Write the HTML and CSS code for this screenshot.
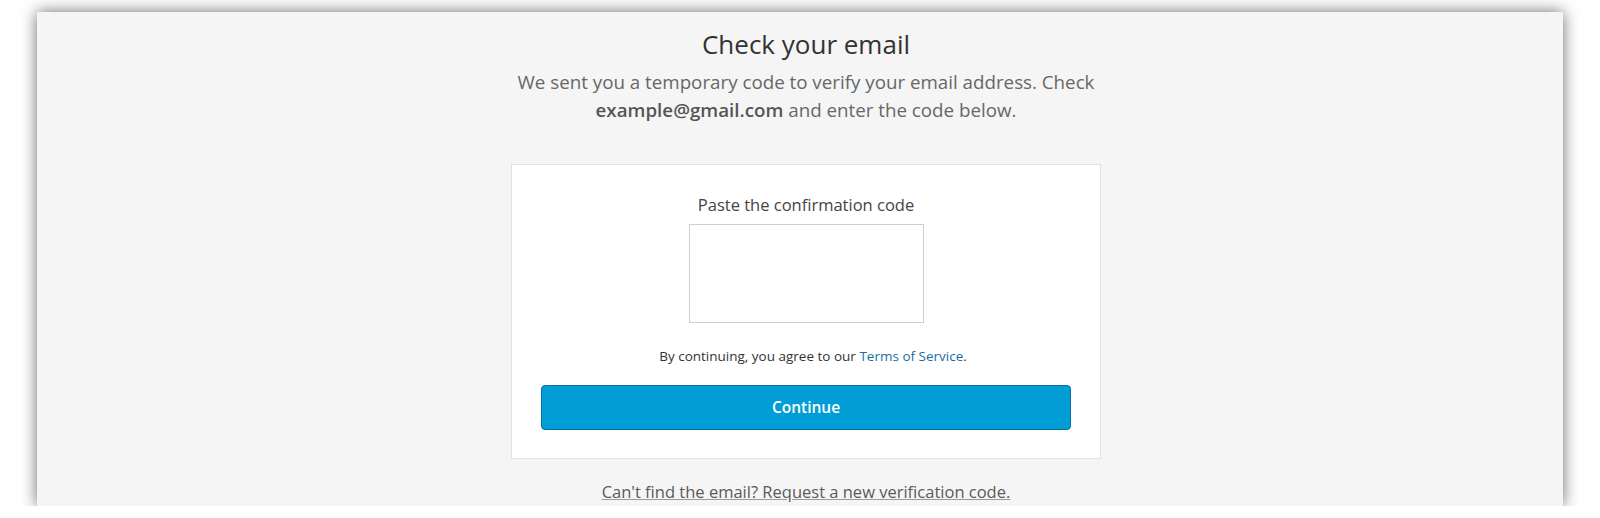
FILE: index.html
```html
<!DOCTYPE html>
<html lang="en">
<head>
<meta charset="utf-8">
<title>Check your email</title>
<link rel="stylesheet" href="styles.css">
</head>
<body>
<div class="panel">
  <div class="content">
    <h1 class="title">Check your email</h1>
    <p class="subtitle">We sent you a temporary code to verify your email address. Check<br><strong>example@gmail.com</strong> and enter the code below.</p>
    <div class="card">
      <label class="label" for="code">Paste the confirmation code</label>
      <textarea id="code" class="code-input"></textarea>
      <p class="terms">By continuing, you agree to our <a href="#" class="terms-link">Terms of Service</a>.</p>
      <button class="btn" type="button">Continue</button>
    </div>
    <a href="#" class="resend">Can't find the email? Request a new verification code.</a>
  </div>
</div>
</body>
</html>
```
FILE: styles.css
```css
html, body {
  margin: 0;
  padding: 0;
  background: #ffffff;
}
body {
  font-family: "Open Sans", "Liberation Sans", sans-serif;
  padding: 12px 37px 0 37px;
}
.panel {
  height: 494px;
  background: #f5f5f5;
  box-shadow: 0 0 15px rgba(0, 0, 0, 0.58);
  overflow: hidden;
}
.content {
  display: flex;
  flex-direction: column;
  align-items: center;
  padding: 14px 0 0 12px;
}
.title {
  margin: 0;
  font-size: 26px;
  line-height: 36px;
  font-weight: 400;
  color: #333333;
}
.subtitle {
  margin: 6px 0 0 0;
  font-size: 18.75px;
  line-height: 28.3px;
  color: #676767;
  text-align: center;
}
.subtitle strong {
  font-weight: 600;
  color: #555555;
}
.card {
  margin-top: 39px;
  width: 530px;
  padding: 28px 29px 28px 29px;
  background: #ffffff;
  border: 1px solid #e1e1e1;
  display: flex;
  flex-direction: column;
  align-items: center;
}
.label {
  font-size: 16.5px;
  line-height: 24px;
  color: #444444;
}
.code-input {
  margin-top: 7px;
  width: 235px;
  height: 99px;
  box-sizing: border-box;
  border: 1px solid #cfcfcf;
  background: #ffffff;
  resize: none;
  padding: 0;
  outline: none;
}
.terms {
  margin: 23px 0 0 0;
  padding-left: 14px;
  font-size: 13.5px;
  line-height: 20px;
  color: #333333;
}
.terms-link {
  color: #1b6ea8;
  text-decoration: none;
}
.btn {
  margin-top: 19px;
  width: 530px;
  height: 45px;
  border: 1px solid #0a6f9a;
  border-radius: 4px;
  background: #009dd6;
  color: #ffffff;
  font-family: "Open Sans", "Liberation Sans", sans-serif;
  font-size: 15.5px;
  font-weight: 600;
  cursor: pointer;
}
.resend {
  margin-top: 20px;
  font-size: 16.5px;
  line-height: 26px;
  color: #5a5a5a;
  text-decoration: underline;
  text-decoration-color: #9a9a9a;
}
```
